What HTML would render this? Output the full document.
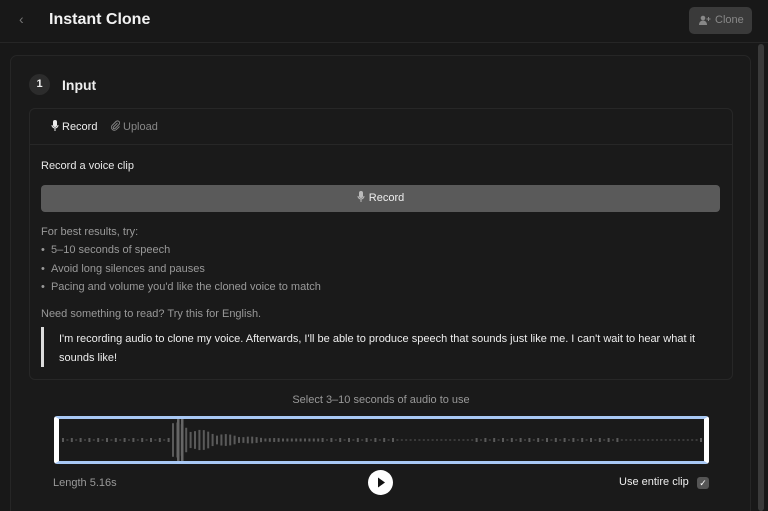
<!DOCTYPE html>
<html><head><style>
*{box-sizing:border-box;margin:0;padding:0}
html,body{width:768px;height:511px;overflow:hidden}
body{background:#181818;font-family:"Liberation Sans",sans-serif;color:#ddd;position:relative}
.hdr{position:absolute;left:0;top:0;width:768px;height:43px;border-bottom:1px solid #262626;background:#181818}
.hdr .back{position:absolute;left:19px;top:11px;color:#777;font-size:14px}
.hdr h1{position:absolute;left:49px;top:11px;font-size:16px;font-weight:bold;color:#f2f2f2}
.clone{position:absolute;left:689px;top:7px;width:63px;height:27px;background:#3a3a3a;border-radius:5px;color:#888;font-size:11px;line-height:27px;padding-left:26px}
.clone svg{position:absolute;left:10px;top:8px}
.scroll{position:absolute;left:758px;top:44px;width:6px;height:467px;background:#3a3a3a;border-radius:3px}
.card{position:absolute;left:10px;top:55px;width:741px;height:470px;border:1px solid #262626;border-radius:7px;background:#1a1a1a}
.num{position:absolute;left:29px;top:74px;width:21px;height:21px;border-radius:50%;background:#2c2c2c;color:#eee;font-size:11px;text-align:center;line-height:21px;font-weight:bold}
.inp{position:absolute;left:62px;top:77px;font-size:14px;font-weight:bold;color:#eee}
.inner{position:absolute;left:29px;top:108px;width:704px;height:272px;border:1px solid #272727;border-radius:6px;background:#1a1a1a}
.tabs{position:absolute;left:29px;top:108px;width:704px;height:37px;border-bottom:1px solid #272727}
.t1{position:absolute;left:51px;top:120px;font-size:11px;color:#eee}
.t2{position:absolute;left:110px;top:120px;font-size:11px;color:#888}
.lbl{position:absolute;left:41px;top:160px;font-size:11px;color:#e8e8e8}
.rec{position:absolute;left:41px;top:185px;width:679px;height:27px;background:#5a5a5a;border-radius:4px;color:#eee;font-size:11px;text-align:center;line-height:27px}
.tips{position:absolute;left:41px;top:223px;font-size:11px;color:#999;line-height:18.3px}
.need{position:absolute;left:41px;top:308px;font-size:11px;color:#999}
.quote{position:absolute;left:41px;top:327px;width:685px;border-left:3px solid #ddd;padding-left:15px;font-size:11px;color:#eee;line-height:19px;height:40px;padding-top:3px}
.sel{position:absolute;left:0;width:762px;top:394px;text-align:center;font-size:11px;color:#999}
.wave{position:absolute;left:54px;top:416px;width:655px;height:48px;border:3px solid #a8c8f4;border-left:5px solid #fff;border-right:5px solid #fff;border-radius:3px}
.bars{position:absolute;left:0;top:0;width:100%;height:100%}
.len{position:absolute;left:53px;top:477px;font-size:11px;color:#999}
.play{position:absolute;left:368px;top:470px;width:25px;height:25px;border-radius:50%;background:#fff}
.use{position:absolute;left:619px;top:476px;font-size:11px;color:#eee}
.chk{position:absolute;left:697px;top:477px;width:12px;height:12px;border-radius:3px;background:#555;color:#fff;font-size:9px;text-align:center;line-height:12px}
</style></head><body>
<div class="hdr"><span class="back">&#8249;</span><h1>Instant Clone</h1>
<div class="clone"><svg width="12" height="11" viewBox="0 0 12 11"><circle cx="4" cy="3" r="2.3" fill="#888"/><path d="M0 10c0-3 2-4.5 4-4.5s4 1.5 4 4.5z" fill="#888"/><path d="M9.5 2v4M7.5 4h4" stroke="#888" stroke-width="1"/></svg>Clone</div></div>
<div class="scroll"></div>
<div class="card"></div>
<div class="num">1</div><div class="inp">Input</div>
<div class="inner"></div><div class="tabs"></div>
<div class="t1"><svg width="8" height="11" viewBox="0 0 8 11" style="vertical-align:-1px;margin-right:3px"><rect x="2" y="0" width="4" height="7" rx="2" fill="#eee"/><path d="M1 5a3 3 0 0 0 6 0M4 8v3" stroke="#eee" fill="none"/></svg>Record</div>
<div class="t2"><svg width="11" height="11" viewBox="0 0 11 11" style="vertical-align:-1px;margin-right:2px"><path d="M7.5 3L3.5 7a1 1 0 0 0 1.5 1.5L9 4.5a2 2 0 0 0-3-3L2 5.5a3 3 0 0 0 4.2 4.2L9.5 6.5" stroke="#888" fill="none" stroke-width="0.9"/></svg>Upload</div>
<div class="lbl">Record a voice clip</div>
<div class="rec"><svg width="8" height="11" viewBox="0 0 8 11" style="vertical-align:-1px;margin-right:4px"><rect x="2" y="0" width="4" height="7" rx="2" fill="#bbb"/><path d="M1 5a3 3 0 0 0 6 0M4 8v3" stroke="#bbb" fill="none"/></svg>Record</div>
<div class="tips">For best results, try:<br>• &nbsp;5–10 seconds of speech<br>• &nbsp;Avoid long silences and pauses<br>• &nbsp;Pacing and volume you'd like the cloned voice to match</div>
<div class="need">Need something to read? Try this for English.</div>
<div class="quote">I'm recording audio to clone my voice. Afterwards, I'll be able to produce speech that sounds just like me. I can't wait to hear what it sounds like!</div>
<div class="sel">Select 3–10 seconds of audio to use</div>
<div class="wave"><svg class="bars" id="b" viewBox="0 0 645 42" preserveAspectRatio="none"></svg></div>
<div class="len">Length 5.16s</div>
<div class="play"><svg width="25" height="25"><path d="M10 7.5l7 5-7 5z" fill="#111"/></svg></div>
<div class="use">Use entire clip</div><div class="chk">✓</div>
<script>
var s='';
for(var x=3;x<642;x+=4.4){var h=1;var d=x-112;
if(d>=0&&d<150){h=Math.max(3,40*Math.exp(-d/45)*(0.55+0.45*Math.abs(Math.sin(x*1.3))));}
else if(Math.sin(x*0.7)>0.5)h=4;
s+='<rect x="'+x.toFixed(1)+'" y="'+(21-h/2)+'" width="2" height="'+h+'" fill="#5a5a5a"/>';}
s+='<rect x="118" y="0" width="2.5" height="42" fill="#666"/><rect x="122" y="0" width="2.5" height="42" fill="#666"/>';
document.getElementById('b').innerHTML=s;
</script>
</body></html>
